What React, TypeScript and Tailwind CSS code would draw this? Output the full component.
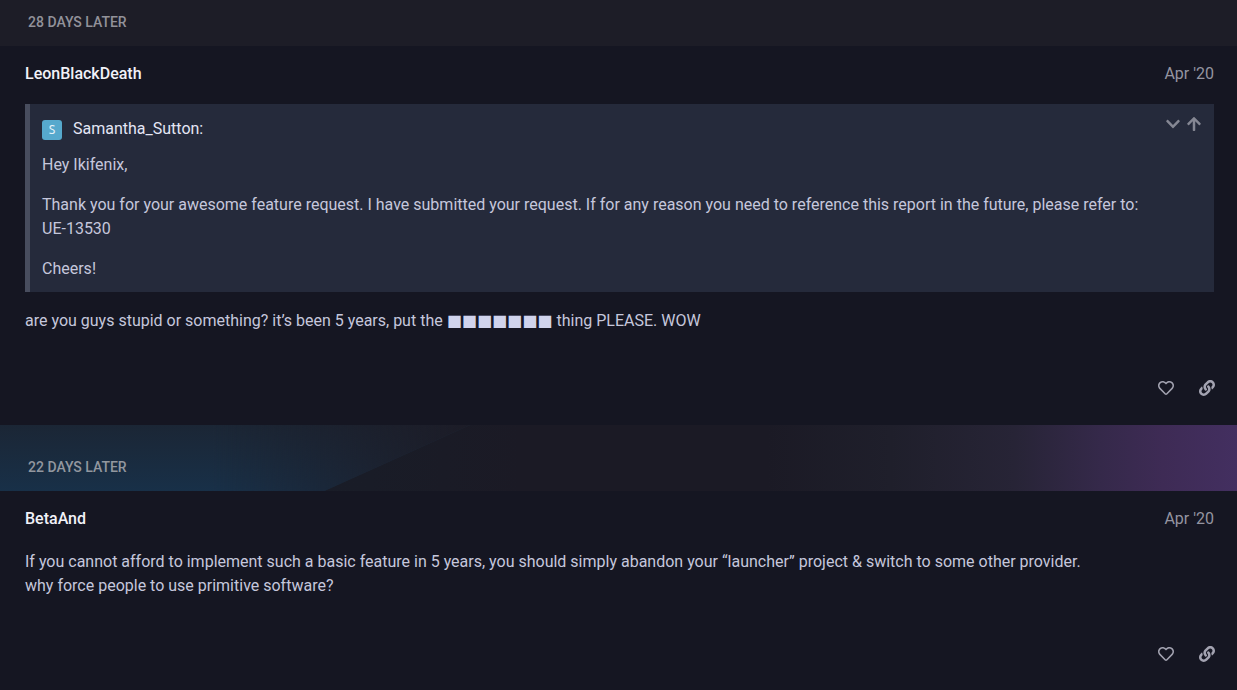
import type { ReactNode } from "react";
import { FaArrowUp, FaChevronDown, FaLink, FaRegHeart } from "react-icons/fa";

function PostActions() {
  return (
    <div className="-mr-px flex h-6 items-center justify-end gap-[25px] text-[16px] text-[#a3a3b1]">
      <button type="button" aria-label="Like this post">
        <FaRegHeart />
      </button>
      <button type="button" aria-label="Copy a link to this post">
        <FaLink />
      </button>
    </div>
  );
}

function Post({ author, date, children }: { author: string; date: string; children: ReactNode }) {
  return (
    <article className="pr-[23px] pl-[25px]">
      <header className="flex items-center justify-between pt-4 leading-6">
        <a href="#author" className="font-medium text-[#f1f1f8]">
          {author}
        </a>
        <a href="#post" className="text-[#9494a0]">
          {date}
        </a>
      </header>
      {children}
      <PostActions />
    </article>
  );
}

function Quote() {
  return (
    <aside className="mt-[18px] border-l-5 border-[#484d5e] bg-[#252a3b] px-3 pt-3 pb-[11px]">
      <div className="flex items-start justify-between">
        <div className="flex items-start pt-px leading-6 text-[#e4e6f5]">
          <span className="mt-[3px] mr-[11px] flex size-5 items-center justify-center rounded-[3px] bg-[#56a9cd] font-['Noto_Sans',sans-serif] text-[12px] leading-5 text-[#e6f3fa]">
            S
          </span>
          Samantha_Sutton:
        </div>
        <div className="flex gap-[5px] text-[16px] text-[#858793]">
          <button type="button" aria-label="Expand quote">
            <FaChevronDown />
          </button>
          <button type="button" aria-label="Go to the quoted post">
            <FaArrowUp />
          </button>
        </div>
      </div>
      <blockquote className="mt-3 flex flex-col gap-4">
        <p>Hey Ikifenix,</p>
        <p>
          Thank you for your awesome feature request. I have submitted your request. If for any reason you need to
          reference this report in the future, please refer to:
          <br />
          UE-13530
        </p>
        <p>Cheers!</p>
      </blockquote>
    </aside>
  );
}

export default function App() {
  return (
    <main className="min-h-screen bg-[#151622] font-[Roboto,sans-serif] text-[16px] leading-6 text-[#c5c7dc]">
      <div className="bg-[#1d1d27] px-7 pt-3 pb-[14px] text-[14px] leading-5 font-medium text-[#92929a]">
        28 DAYS LATER
      </div>
      <Post author="LeonBlackDeath" date="Apr '20">
        <Quote />
        <p className="mt-[17px] mb-[43px]">
          are you guys stupid or something? it’s been 5 years, put the{" "}
          <span className="font-['DejaVu_Sans',sans-serif] text-[#d0d3ec]">■■■■■■■</span> thing PLEASE. WOW
        </p>
      </Post>
      <div className="relative mt-[25px] overflow-hidden bg-[linear-gradient(90deg,#1a1d29_0%,#191c27_30%,#1b1a25_42%,#1b1a25_62%,#1f1f2b_72%,#272436_82%,#35294a_89%,#3e2b55_94%,#432f60_100%)] px-7 pt-8 pb-[14px] text-[14px] leading-5 font-medium text-[#92979f]">
        <div className="absolute inset-y-0 left-0 w-[38%] bg-[linear-gradient(90deg,transparent_0%,transparent_45%,#1c1c27_100%),linear-gradient(180deg,#1b2635_0%,#183048_100%)] [clip-path:polygon(0_0,100%_0,69%_100%,0_100%)]" />
        <span className="relative">22 DAYS LATER</span>
      </div>
      <Post author="BetaAnd" date="Apr '20">
        <p className="mt-[19px] mb-11">
          If you cannot afford to implement such a basic feature in 5 years, you should simply abandon your “launcher”
          project &amp; switch to some other provider.
          <br />
          why force people to use primitive software?
        </p>
      </Post>
    </main>
  );
}
